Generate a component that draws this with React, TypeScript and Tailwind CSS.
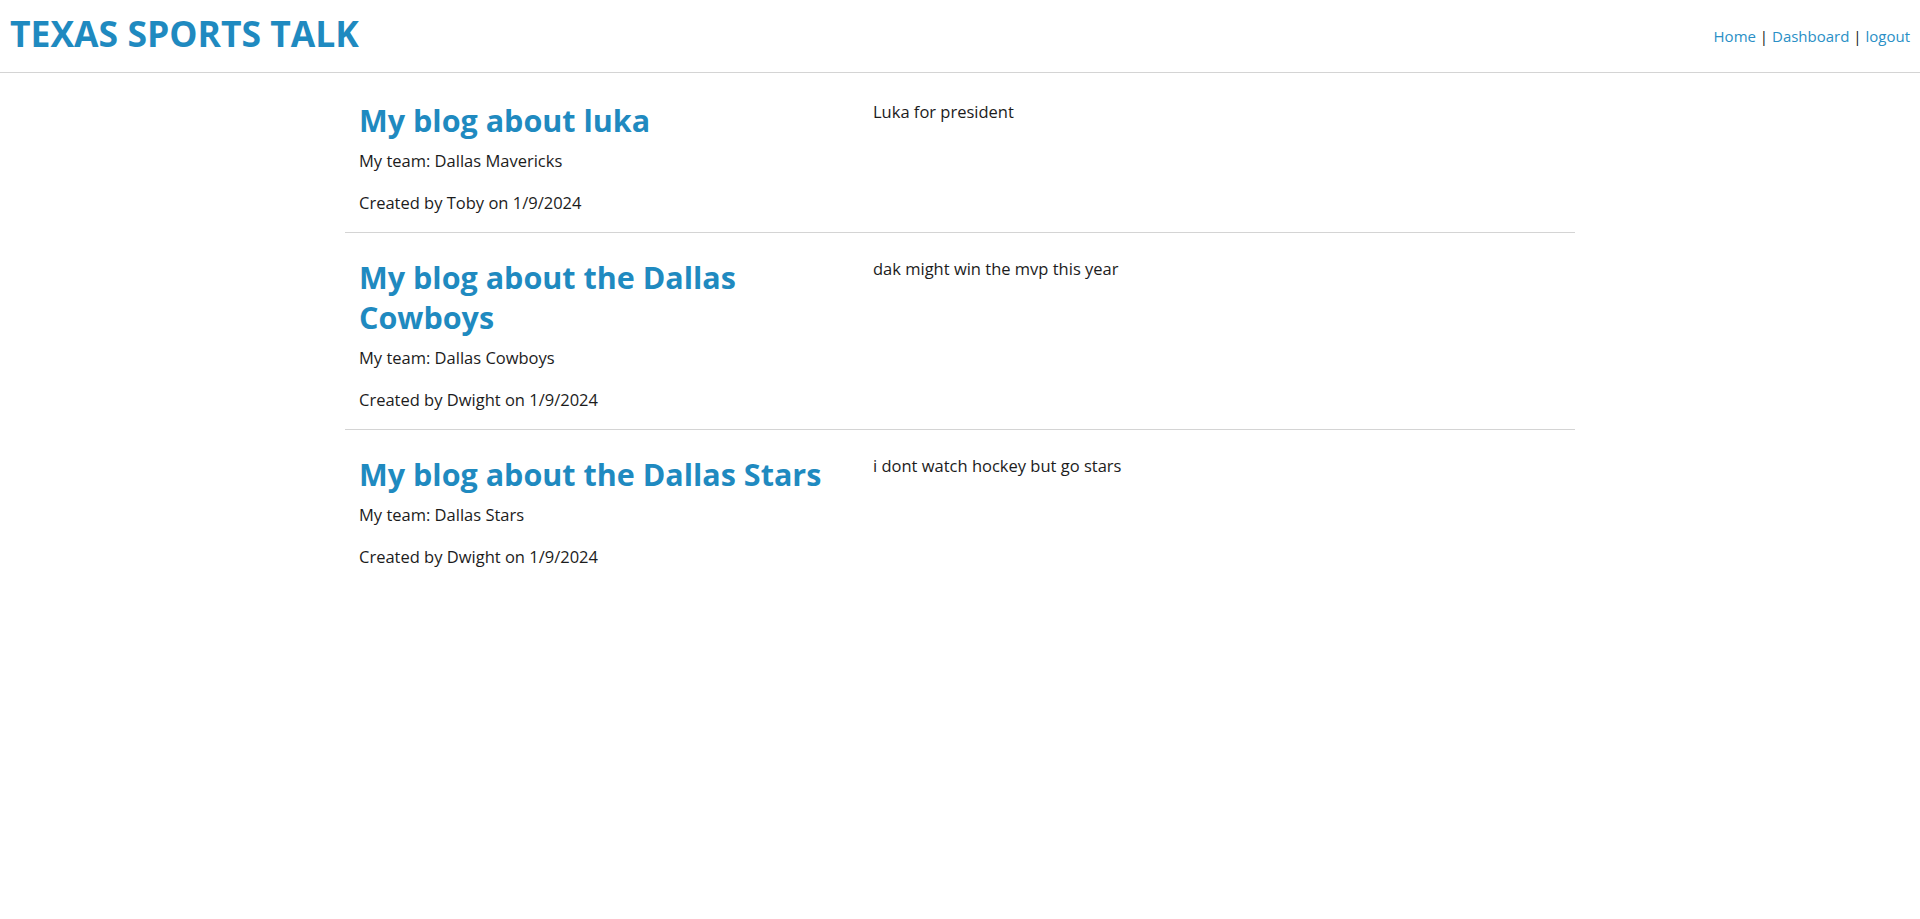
const posts = [
  {
    id: 1,
    title: "My blog about luka",
    team: "Dallas Mavericks",
    author: "Toby",
    date: "1/9/2024",
    body: "Luka for president",
  },
  {
    id: 2,
    title: "My blog about the Dallas Cowboys",
    team: "Dallas Cowboys",
    author: "Dwight",
    date: "1/9/2024",
    body: "dak might win the mvp this year",
  },
  {
    id: 3,
    title: "My blog about the Dallas Stars",
    team: "Dallas Stars",
    author: "Dwight",
    date: "1/9/2024",
    body: "i dont watch hockey but go stars",
  },
]

function Header() {
  return (
    <header className="h-[73px] flex justify-between items-start px-[10px] border-b border-[#d4d4d4]">
      <h1 className="mt-[10px] text-[35.5px] leading-[46px] font-bold text-[#1f8ac0]">TEXAS SPORTS TALK</h1>
      <nav className="mt-[24px] text-[15px] leading-[24px] text-[#111]">
        <a href="#" className="text-[#2a8fc6]">Home</a> | <a href="#" className="text-[#2a8fc6]">Dashboard</a> |{" "}
        <a href="#" className="text-[#2a8fc6]">logout</a>
      </nav>
    </header>
  )
}

function Post({ post, last }: { post: (typeof posts)[number]; last: boolean }) {
  return (
    <div className={`flex pt-[24px] pb-[17px] ${last ? "" : "border-b border-[#d4d4d4]"}`}>
      <div className="w-[514px] px-[14px]">
        <h2 className="text-[30.5px] leading-[40px] font-bold text-[#1f8ac0]">{post.title}</h2>
        <p className="mt-[9px] text-[16.5px] leading-[24px]">My team: {post.team}</p>
        <p className="mt-[18px] text-[16.5px] leading-[24px]">
          Created by {post.author} on {post.date}
        </p>
      </div>
      <div className="flex-1 px-[14px]">
        <p className="text-[16.5px] leading-[24px]">{post.body}</p>
      </div>
    </div>
  )
}

export default function App() {
  return (
    <div className="min-h-screen bg-white text-[#1c1c1c] font-['Open_Sans',sans-serif]">
      <Header />
      <main className="w-[1230px] mx-auto mt-[3px]">
        {posts.map((post, i) => (
          <Post key={post.id} post={post} last={i === posts.length - 1} />
        ))}
      </main>
    </div>
  )
}
